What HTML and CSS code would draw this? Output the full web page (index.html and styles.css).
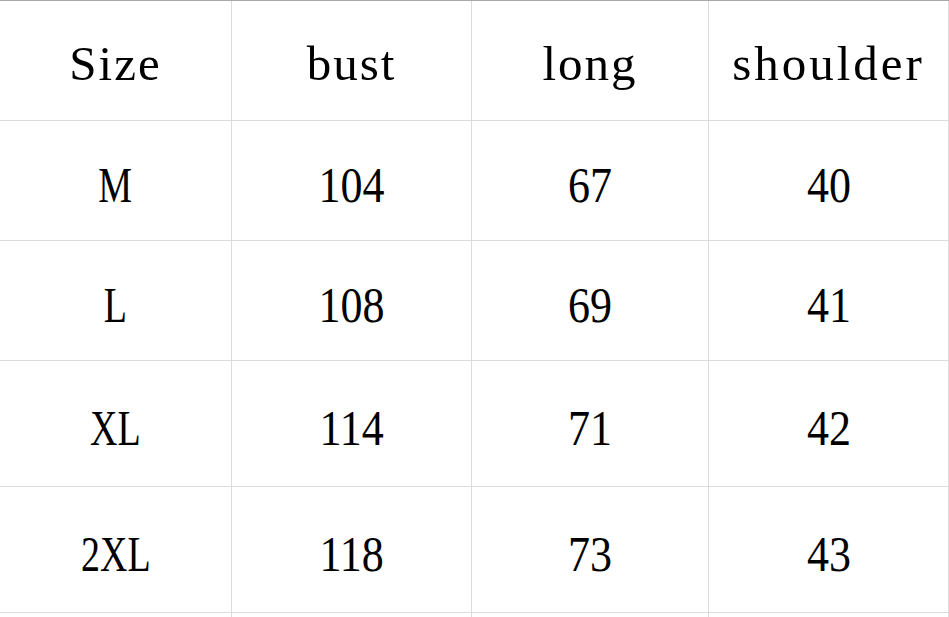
FILE: index.html
```html
<!DOCTYPE html>
<html>
<head>
<meta charset="utf-8">
<link rel="stylesheet" href="styles.css">
</head>
<body>
<div class="sheet">
  <div class="row head">
    <div class="cell"><span>Size</span></div>
    <div class="cell"><span>bust</span></div>
    <div class="cell"><span>long</span></div>
    <div class="cell"><span>shoulder</span></div>
  </div>
  <div class="row">
    <div class="cell size"><span>M</span></div>
    <div class="cell"><span>104</span></div>
    <div class="cell"><span>67</span></div>
    <div class="cell"><span>40</span></div>
  </div>
  <div class="row">
    <div class="cell size"><span>L</span></div>
    <div class="cell"><span>108</span></div>
    <div class="cell"><span>69</span></div>
    <div class="cell"><span>41</span></div>
  </div>
  <div class="row tall">
    <div class="cell size"><span>XL</span></div>
    <div class="cell"><span>114</span></div>
    <div class="cell"><span>71</span></div>
    <div class="cell"><span>42</span></div>
  </div>
  <div class="row tall">
    <div class="cell size"><span>2XL</span></div>
    <div class="cell"><span>118</span></div>
    <div class="cell"><span>73</span></div>
    <div class="cell"><span>43</span></div>
  </div>
  <div class="row rest">
    <div class="cell"></div>
    <div class="cell"></div>
    <div class="cell"></div>
    <div class="cell"></div>
  </div>
</div>
</body>
</html>
```

FILE: styles.css
```css
html, body {
  margin: 0;
  padding: 0;
  background: #ffffff;
}
body {
  width: 949px;
  height: 617px;
  overflow: hidden;
  font-family: "Liberation Serif", "Noto Sans CJK SC", serif;
  color: #000;
}
.sheet {
  border-top: 1px solid #a8a8a8;
}
.row {
  display: grid;
  grid-template-columns: 232px 240px 237px 240px;
  height: 120px;
}
.row.tall {
  height: 126px;
}
.row.rest {
  height: 4px;
}
.cell {
  border-right: 1px solid #dcdcdc;
  border-bottom: 1px solid #dcdcdc;
  display: flex;
  align-items: center;
  justify-content: center;
  padding-top: 8px;
  box-sizing: border-box;
}
.rest .cell {
  border-bottom: none;
  padding-top: 0;
}
.cell span {
  display: inline-block;
  font-size: 50px;
  line-height: 1;
  transform: scaleX(0.88);
}
.cell.size span {
  transform: scaleX(0.76);
}
.head .cell {
  padding-top: 6px;
}
.head .cell span {
  transform: none;
  font-size: 49px;
  letter-spacing: 2px;
}
.head .cell:last-child span {
  letter-spacing: 3px;
}
```
